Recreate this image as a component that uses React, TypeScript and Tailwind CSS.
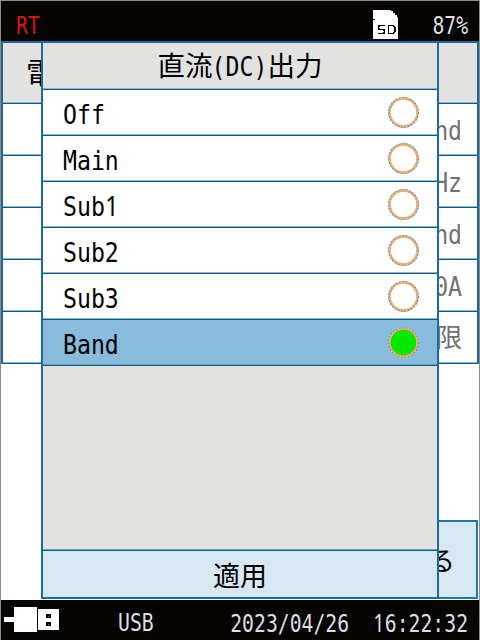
import { useState } from "react";
import clsx from "clsx";

const options = ["Off", "Main", "Sub1", "Sub2", "Sub3", "Band"];

const settings = ["Band", "50Hz", "Band", "500A", "無限"];

// the device font has a plain "1" without a foot, so that digit comes from Noto Sans
function plainOne(text: string) {
  return text.split(/(1)/).map((part, i) =>
    part === "1" ? (
      <span key={i} className="inline-block w-[0.602em] text-center font-['Noto_Sans',sans-serif] leading-none">1</span>
    ) : (
      part
    )
  );
}

// condensed 14px cell terminal text
function Mono({ children, className }: { children: string; className?: string }) {
  return (
    <span
      className={clsx(
        "inline-block whitespace-pre font-['DejaVu_Sans_Mono',monospace] text-[27px] leading-none scale-x-[0.858]",
        className
      )}
    >
      {plainOne(children)}
    </span>
  );
}

// smaller 12px cell text of the status bars
function Status({ children, className }: { children: string; className?: string }) {
  return (
    <span
      className={clsx(
        "inline-block whitespace-pre font-['DejaVu_Sans_Mono',monospace] text-[25px] leading-none scale-x-[0.79]",
        className
      )}
    >
      {plainOne(children)}
    </span>
  );
}

function SdIcon() {
  return (
    <svg width="25" height="29" viewBox="0 0 25 29" shapeRendering="crispEdges">
      <path d="M0 0h18v1h2v2h2v2h2v2h1v22H0V10h2V9H0z" fill="#fff" />
      <path
        d="M12 15.5H6.5l-1 1v2l1 1h4l1 1v2l-1 1H5M15.5 15v9M15 15.5h5l2 2v4l-2 2h-5"
        fill="none"
        stroke="#060303"
        strokeWidth="1.5"
      />
    </svg>
  );
}

function UsbIcon() {
  return (
    <svg width="55" height="25" viewBox="0 0 55 25" shapeRendering="crispEdges">
      <path d="M0 10h10V0h23v25H10V15H0zM34 2h21v21H34z" fill="#fff" />
      <path d="M42 7h5v4h-5zM42 15h5v4h-5z" fill="#060303" />
      <path d="M44 9h1v1h-1zM44 17h1v1h-1z" fill="#777" />
    </svg>
  );
}

function Radio({ checked }: { checked: boolean }) {
  return (
    <svg width="31" height="31" viewBox="0 0 31 31">
      <circle cx="15.5" cy="15.5" r="14" fill={checked ? "#00e800" : "#fff"} />
      <circle cx="15.5" cy="15.5" r="14.8" fill="none" stroke="#b9d0dc" strokeWidth="1.2" />
      <circle cx="15.5" cy="15.5" r="14.8" fill="none" stroke="#4f8cad" strokeWidth="1.1" strokeDasharray="2 1.4" />
      <circle cx="15.5" cy="15.5" r="13.6" fill="none" stroke="#f6a65e" strokeWidth="1.8" />
    </svg>
  );
}

export default function App() {
  const [selected, setSelected] = useState("Band");

  return (
    <div className="relative flex h-[640px] w-[480px] flex-col overflow-hidden bg-white text-black">
      <header className="flex h-[41px] shrink-0 items-end bg-[#060303]">
        <Status className="mb-[3px] ml-4 origin-left text-[#d8151b]">RT</Status>
        <div className="ml-auto flex items-end">
          <div className="mb-[2px]"><SdIcon /></div>
          <Status className="mb-[3px] ml-[25px] mr-[12px] origin-right text-[#dedede]">87%</Status>
        </div>
      </header>

      <main className="flex h-[558px] shrink-0 flex-col">
        <div className="ml-px mr-px border-x-2 border-t-2 border-[#1c6794]">
          <div className="flex h-[60px] items-center bg-[#e2e2e1] pb-1 pl-[23px] font-['Noto_Sans_CJK_JP',sans-serif] text-[30px] leading-none">
            電流
          </div>
          {settings.map((value, i) => (
            <div
              key={i}
              className="flex h-[52px] items-center justify-end border-t border-[#0b5a8e] pr-[15px] text-[#707270] shadow-[0_-1px_#8fb5cb]"
            >
              {value === "無限" ? (
                <span className="pb-1 font-['Noto_Sans_CJK_JP',sans-serif] text-[26px] leading-none">{value}</span>
              ) : (
                <Mono className="mt-[2px] origin-right">{value}</Mono>
              )}
            </div>
          ))}
          <div className="border-t border-[#0b5a8e] shadow-[0_-1px_#8fb5cb]" />
        </div>
        <button className="ml-auto mr-[2px] mt-auto flex h-[79px] w-[160px] items-center justify-end border-2 border-[#1c78a6] bg-[#d8e8f3] pr-[21px] font-['Noto_Sans_CJK_JP',sans-serif] text-[27px] leading-none">
          戻る
        </button>
      </main>

      <footer className="mt-px flex h-10 shrink-0 items-start bg-[#060303] text-[#dedede]">
        <div className="ml-1 mt-[7px]"><UsbIcon /></div>
        <Status className="ml-[59px] mt-[10px] origin-left">USB</Status>
        <Status className="ml-auto mr-[12px] mt-[10px] origin-right">{"2023/04/26  16:22:32"}</Status>
      </footer>

      {/* dialog over the settings page */}
      <div className="absolute left-[41px] top-[41px] flex h-[558px] w-[398px] flex-col border-2 border-[#1c6b9e] bg-[#e2e2e1]">
        <h1 className="flex h-[46px] shrink-0 items-center justify-center">
          <span className="pb-[2px] font-['Noto_Sans_CJK_JP',sans-serif] text-[27.5px] leading-none">直流</span>
          <Mono className="-mx-[5px]">(DC)</Mono>
          <span className="pb-[2px] font-['Noto_Sans_CJK_JP',sans-serif] text-[27.5px] leading-none">出力</span>
        </h1>
        {options.map((name) => (
          <button
            key={name}
            onClick={() => setSelected(name)}
            className={clsx(
              "flex h-[46px] shrink-0 items-center justify-between border-t border-[#0b5a8e] pl-5 pr-[18px] shadow-[0_-1px_#8fb5cb]",
              selected === name ? "bg-[#88bbdc]" : "bg-white"
            )}
          >
            <Mono className="mt-[3px] origin-left">{name}</Mono>
            <Radio checked={selected === name} />
          </button>
        ))}
        <div className="flex-1 border-t border-[#0b5a8e] shadow-[0_-1px_#6fa0bc]" />
        <button className="h-[47px] shrink-0 border-t border-[#046296] bg-[#d8e8f3] font-['Noto_Sans_CJK_JP',sans-serif] text-[27px] leading-none shadow-[0_-1px_#6fa0bc]">
          適用
        </button>
      </div>

      {/* thin bezel edge */}
      <div className="pointer-events-none absolute inset-0 border-x border-t border-[#928c88]" />
    </div>
  );
}
